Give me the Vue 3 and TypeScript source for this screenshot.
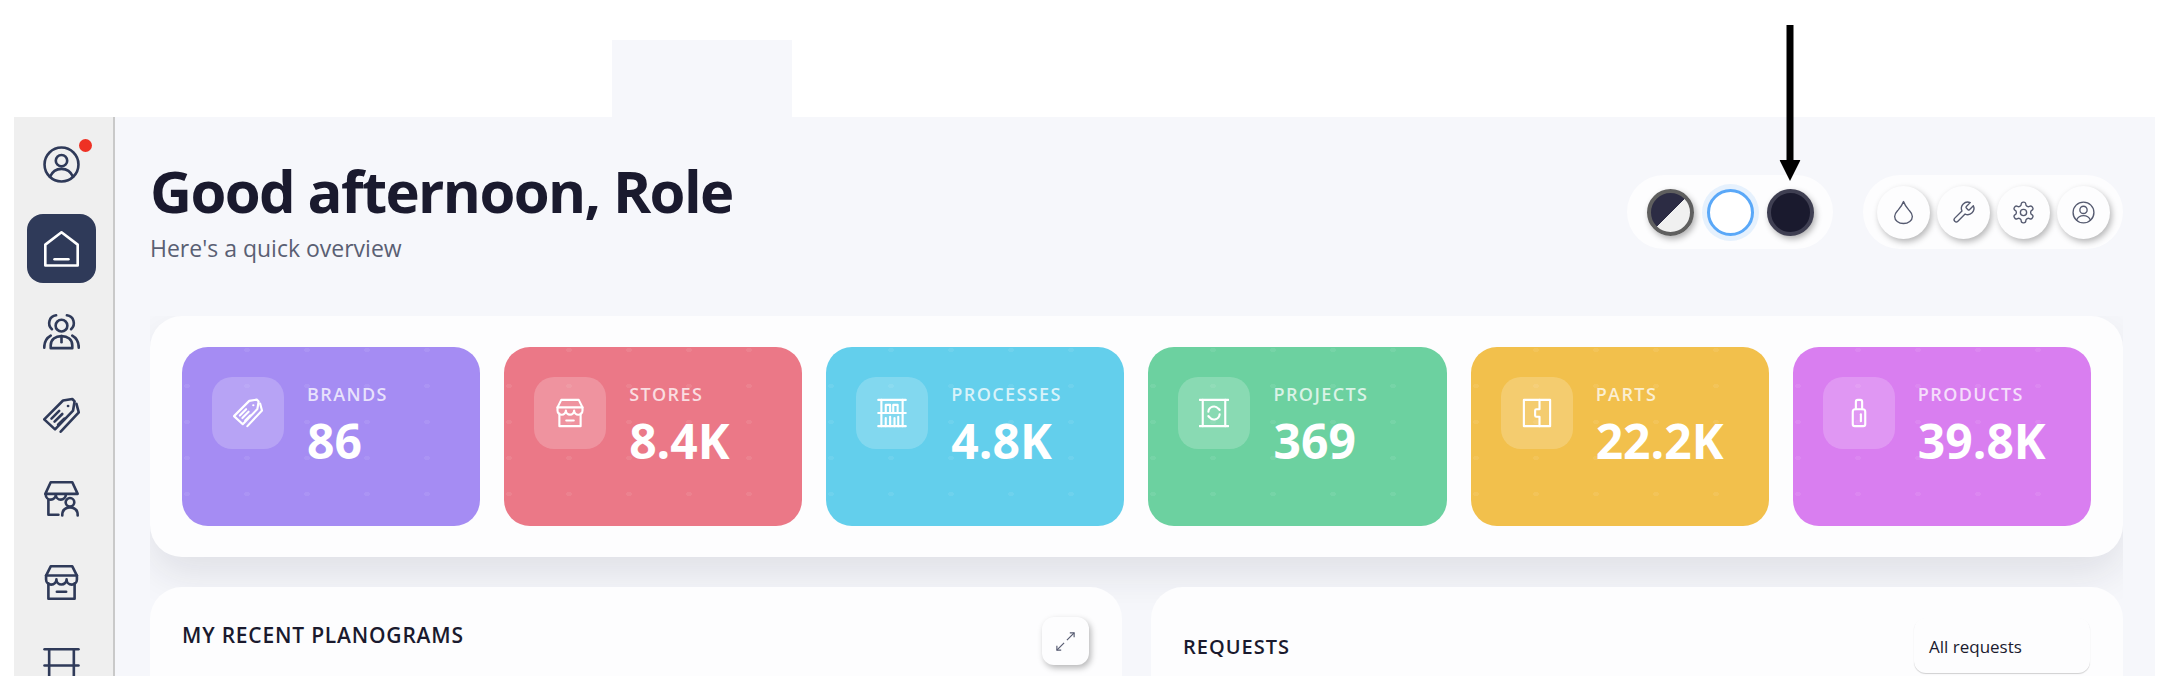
<script setup lang="ts">
type Icon = string[]

const icons: Record<string, Icon> = {
  profile: [
    'M1 12a11 11 0 1 0 22 0a11 11 0 1 0-22 0z',
    'M8.300 9.500a3.700 3.700 0 1 0 7.400 0a3.700 3.700 0 1 0-7.400 0z',
    'M4.500 20c1.500-3.500 4.300-5.200 7.500-5.200s6 1.700 7.500 5.200'
  ],
  home: ['M1.500 23V9.500L12 1.500l10.500 8V23z', 'M7.500 19h9'],
  users: [
    'M8.200 8.200a3.800 3.800 0 1 0 7.600 0a3.800 3.800 0 1 0-7.600 0z',
    'M5.800 10.500C2.500 7.500 4 2 8.500 1.500',
    'M18.200 10.500C21.500 7.500 20 2 15.500 1.500',
    'M5 22.800v-1.800c0-3.800 3-6 7-6s7 2.200 7 6v1.800z',
    'M12 15v4',
    'M.8 22.500c0-3.800 1.700-6.400 4.200-7.800',
    'M23.200 22.500c0-3.800-1.700-6.400-4.200-7.800'
  ],
  tags: [
    'M.8 14.500L13 2.300l6-1 1.500 1.500-1 6L7.800 21z',
    'M16.200 5.800h.1',
    'M5.500 14l5-5',
    'M7.500 16l5-5',
    'M9.800 18l4-4',
    'M21.700 4.500l1.500 5.500L11.500 22.500'
  ],
  shopUser: [
    'M5 1.500h14l3.500 7.500h-21z',
    'M1.800 9.500a3.200 3.200 0 0 0 6.500 0a3.200 3.200 0 0 0 6.500 0',
    'M3.500 13v9.500h6.500',
    'M14.700 14.500a2.800 2.800 0 1 0 5.600 0a2.800 2.800 0 1 0-5.600 0z',
    'M12.500 23c0-3.500 2-5.200 5-5.200s5 1.700 5 5.200'
  ],
  store: [
    'M5 1.500h14l3 6v2.500a3.300 3.300 0 0 1-6.700 0a3.300 3.300 0 0 1-6.600 0a3.300 3.300 0 0 1-6.700 0V7.500z',
    'M2 7.500h20',
    'M3.500 12.500v10h17v-10',
    'M9 18h6'
  ],
  shelf: ['M1 1.500h22', 'M4 1.500V23', 'M20 1.500V23', 'M1 12h22', 'M1 23h22'],
  processes: [
    'M1 1.500h22', 'M1 12h22', 'M1 22.500h22', 'M3.500 1.500v21', 'M20.500 1.500v21',
    'M7 12V5.500h3.500V12', 'M13 12V5.500h3.500V12',
    'M7 22.500V16', 'M10.500 22.500V15', 'M14 22.500V16', 'M17 22.500V15'
  ],
  projects: [
    'M.5 1.500h23', 'M.5 22.500h23', 'M3 1.500v21', 'M21 1.500v21',
    'M7.500 11a4.500 4.500 0 0 1 8-2.500l1 1', 'M16.500 13a4.500 4.500 0 0 1-8 2.500l-1-1'
  ],
  parts: [
    'M1.500 1.500h21v21h-21z',
    'M14 1.500v7.500h-2.500a1 1 0 0 0-1 1v4a1 1 0 0 0 1 1H14v7.500'
  ],
  products: [
    'M9.500 9V3a1.500 1.500 0 0 1 1.500-1.500h2A1.500 1.500 0 0 1 14.500 3v6',
    'M7 11a2 2 0 0 1 2-2h6a2 2 0 0 1 2 2v10a1.500 1.500 0 0 1-1.500 1.500h-7A1.500 1.500 0 0 1 7 21z',
    'M13.500 13v5.500'
  ],
  drop: ['M12 1.500c-1 3-2.800 5.400-5 8-1.800 2-3.500 3.500-3.500 6.300a8.500 6.800 0 0 0 17 0c0-2.800-1.700-4.300-3.500-6.300-2.200-2.600-4-5-5-8z'],
  wrench: ['M14.700 6.300a1 1 0 0 0 0 1.400l1.600 1.600a1 1 0 0 0 1.400 0l3.770-3.770a6 6 0 0 1-7.940 7.940l-6.910 6.910a2.120 2.120 0 0 1-3-3l6.910-6.910a6 6 0 0 1 7.940-7.940l-3.760 3.760z'],
  gear: [
    'M12.220 2h-.44a2 2 0 0 0-2 2v.18a2 2 0 0 1-1 1.730l-.43.25a2 2 0 0 1-2 0l-.15-.08a2 2 0 0 0-2.730.73l-.22.38a2 2 0 0 0 .73 2.730l.15.1a2 2 0 0 1 1 1.720v.51a2 2 0 0 1-1 1.740l-.15.09a2 2 0 0 0-.73 2.730l.22.38a2 2 0 0 0 2.730.73l.15-.08a2 2 0 0 1 2 0l.43.25a2 2 0 0 1 1 1.730V20a2 2 0 0 0 2 2h.44a2 2 0 0 0 2-2v-.18a2 2 0 0 1 1-1.730l.43-.25a2 2 0 0 1 2 0l.15.08a2 2 0 0 0 2.730-.73l.22-.39a2 2 0 0 0-.73-2.730l-.15-.08a2 2 0 0 1-1-1.740v-.5a2 2 0 0 1 1-1.740l.15-.09a2 2 0 0 0 .73-2.730l-.22-.38a2 2 0 0 0-2.730-.73l-.15.08a2 2 0 0 1-2 0l-.43-.25a2 2 0 0 1-1-1.730V4a2 2 0 0 0-2-2z',
    'M9 12a3 3 0 1 0 6 0a3 3 0 1 0-6 0z'
  ],
  account: [
    'M2 12a10 10 0 1 0 20 0a10 10 0 1 0-20 0z',
    'M8.500 9.500a3.500 3.500 0 1 0 7 0a3.500 3.500 0 1 0-7 0z',
    'M5.300 19.300c1.200-2.700 3.700-4.300 6.700-4.300s5.500 1.600 6.700 4.300'
  ],
  expand: ['M16.500 3H21v4.500', 'M21 3l-7.500 7.500', 'M3 21l7.500-7.500', 'M3 16.500V21h4.500']
}

const sideItems: { icon: string; active?: boolean; badge?: boolean }[] = [
  { icon: 'profile', badge: true },
  { icon: 'home', active: true },
  { icon: 'users' },
  { icon: 'tags' },
  { icon: 'shopUser' },
  { icon: 'store' },
  { icon: 'shelf' }
]

const metrics = [
  { label: 'BRANDS', value: '86', icon: 'tags', color: 'purple' },
  { label: 'STORES', value: '8.4K', icon: 'store', color: 'red' },
  { label: 'PROCESSES', value: '4.8K', icon: 'processes', color: 'blue' },
  { label: 'PROJECTS', value: '369', icon: 'projects', color: 'green' },
  { label: 'PARTS', value: '22.2K', icon: 'parts', color: 'yellow' },
  { label: 'PRODUCTS', value: '39.8K', icon: 'products', color: 'pink' }
]

const tools = ['drop', 'wrench', 'gear', 'account']
</script>

<template>
  <div class="page">
    <div class="top-strip">
      <div class="tab"></div>
    </div>

    <div class="app">
      <aside class="sidebar">
        <div
          v-for="item in sideItems"
          :key="item.icon"
          class="side-item"
          :class="{ active: item.active }"
        >
          <svg class="side-icon" viewBox="0 0 24 24">
            <path v-for="d in icons[item.icon]" :key="d" :d="d" />
          </svg>
          <span v-if="item.badge" class="badge"></span>
        </div>
      </aside>

      <main class="main">
        <header class="header">
          <div class="greeting">
            <h1>Good afternoon, Role</h1>
            <p>Here's a quick overview</p>
          </div>
          <div class="controls">
            <div class="pill swatches">
              <span class="swatch auto"></span>
              <span class="swatch light"></span>
              <span class="swatch dark">
                <svg class="arrow" viewBox="0 0 21 156">
                  <path d="M7 0h7v135h7l-10.500 21L0 135h7z" />
                </svg>
              </span>
            </div>
            <div class="pill tools">
              <button v-for="tool in tools" :key="tool" class="tool-btn">
                <svg viewBox="0 0 24 24">
                  <path v-for="d in icons[tool]" :key="d" :d="d" />
                </svg>
              </button>
            </div>
          </div>
        </header>

        <div class="content">
          <section class="metrics">
            <div v-for="m in metrics" :key="m.label" class="metric" :class="m.color">
              <div class="metric-icon">
                <svg viewBox="0 0 24 24">
                  <path v-for="d in icons[m.icon]" :key="d" :d="d" />
                </svg>
              </div>
              <div class="metric-text">
                <div class="metric-label">{{ m.label }}</div>
                <div class="metric-value">{{ m.value }}</div>
              </div>
            </div>
          </section>

          <div class="panels">
            <section class="panel planograms">
              <h2>MY RECENT PLANOGRAMS</h2>
              <button class="expand-btn">
                <svg viewBox="0 0 24 24">
                  <path v-for="d in icons.expand" :key="d" :d="d" />
                </svg>
              </button>
            </section>
            <section class="panel requests">
              <h2>REQUESTS</h2>
              <div class="select">All requests</div>
            </section>
          </div>
        </div>
      </main>
    </div>
  </div>
</template>

<style>
html,
body {
  margin: 0;
  background: #fff;
}
</style>

<style scoped>
.page {
  width: 2169px;
  height: 688px;
  overflow: hidden;
  background: #fff;
  font-family: "Open Sans", "Liberation Sans", sans-serif;
  color: #1a1a2e;
}
.top-strip {
  height: 117px;
  padding: 40px 0 0 612px;
  box-sizing: border-box;
}
.tab {
  width: 180px;
  height: 77px;
  background: #f6f7fb;
}
.app {
  display: flex;
  height: 559px;
  margin: 0 14px;
  background: #f6f7fb;
}
.sidebar {
  flex: none;
  width: 95px;
  padding: 13px 4px 0 0;
  overflow: hidden;
  display: flex;
  flex-direction: column;
  align-items: center;
  gap: 14.5px;
  background: #efefef;
  border-right: 2px solid #c9c9c9;
}
.side-item {
  position: relative;
  flex: none;
  width: 69px;
  height: 69px;
  display: flex;
  align-items: center;
  justify-content: center;
  border-radius: 16px;
}
.side-item.active {
  background: #2f3a59;
}
.side-icon {
  width: 37px;
  height: 37px;
  fill: none;
  stroke: #2f3a59;
  stroke-width: 1.7;
  stroke-linecap: round;
  stroke-linejoin: round;
}
.active .side-icon {
  stroke: #fff;
}
.badge {
  position: absolute;
  top: 9px;
  right: 4px;
  width: 13px;
  height: 13px;
  border-radius: 50%;
  background: #ee3124;
}
.main {
  flex: 1;
  min-width: 0;
  display: flex;
  flex-direction: column;
  padding: 0 32px 0 35px;
}
.header {
  flex: none;
  height: 199px;
  display: flex;
  justify-content: space-between;
}
.greeting {
  padding-top: 39px;
}
.greeting h1 {
  margin: 0;
  font-size: 58px;
  line-height: 70px;
  font-weight: 700;
  letter-spacing: -1.6px;
  color: #1a1a2e;
}
.greeting p {
  margin: 8px 0 0;
  font-size: 23px;
  line-height: 28px;
  color: #5a5f73;
}
.controls {
  display: flex;
  align-items: flex-start;
  gap: 30px;
  padding-top: 58px;
}
.pill {
  height: 74px;
  box-sizing: border-box;
  display: flex;
  align-items: center;
  border-radius: 37px;
  background: #fdfdfe;
}
.swatches {
  gap: 13px;
  padding: 0 19.5px;
}
.swatch {
  position: relative;
  width: 47px;
  height: 47px;
  box-sizing: border-box;
  border-radius: 50%;
  box-shadow: 2px 3px 6px rgba(0, 0, 0, 0.3);
}
.swatch.auto {
  border: 4px solid #5f5f5f;
  background: linear-gradient(135deg, #2c2c44 50%, #f0f0f0 50%);
}
.swatch.light {
  border: 3px solid #5aa8f8;
  background: #fff;
  box-shadow: 0 0 0 5px rgba(90, 168, 248, 0.14);
}
.swatch.dark {
  border: 4px solid #3f3f52;
  background: #1a1a2e;
}
.arrow {
  position: absolute;
  left: 50%;
  bottom: calc(100% + 12px);
  width: 21px;
  height: 156px;
  transform: translateX(-50%);
  fill: #000;
}
.tools {
  gap: 7px;
  padding: 0 13.5px;
}
.tool-btn {
  flex: none;
  width: 53px;
  height: 53px;
  padding: 0;
  display: flex;
  align-items: center;
  justify-content: center;
  border: none;
  border-radius: 50%;
  background: #fdfdfe;
  box-shadow: 2px 3px 6px rgba(0, 0, 0, 0.28);
}
.tool-btn svg {
  width: 25px;
  height: 25px;
  fill: none;
  stroke: #555a70;
  stroke-width: 1.3;
  stroke-linecap: round;
  stroke-linejoin: round;
}
.content {
  flex: 1;
  min-height: 0;
  overflow: hidden;
  display: flex;
  flex-direction: column;
  gap: 30px;
}
.metrics {
  flex: none;
  height: 241px;
  box-sizing: border-box;
  padding: 31px 32px 31px 32px;
  display: grid;
  grid-template-columns: repeat(6, 1fr);
  gap: 24px;
  border-radius: 32px;
  background: #fdfdfe;
  box-shadow: 0 18px 40px rgba(26, 26, 46, 0.1);
}
.metric {
  display: flex;
  align-items: flex-start;
  gap: 23px;
  padding: 30px;
  border-radius: 26px;
  background-image: radial-gradient(ellipse 3px 2px at 5px 3px, rgba(255, 255, 255, 0.07) 99%, transparent);
  background-size: 60px 36px;
}
.purple { background-color: #a58cf3; }
.red { background-color: #eb7887; }
.blue { background-color: #63cfec; }
.green { background-color: #6cd1a0; }
.yellow { background-color: #f2c04c; }
.pink { background-color: #d97ef0; }
.metric-icon {
  flex: none;
  width: 72px;
  height: 72px;
  display: flex;
  align-items: center;
  justify-content: center;
  border-radius: 20px;
  background: rgba(255, 255, 255, 0.2);
}
.metric-icon svg {
  width: 30px;
  height: 30px;
  fill: none;
  stroke: #fff;
  stroke-width: 1.7;
  stroke-linecap: round;
  stroke-linejoin: round;
}
.metric-label {
  margin-top: 5px;
  font-size: 18px;
  line-height: 24px;
  font-weight: 600;
  letter-spacing: 1.4px;
  color: rgba(255, 255, 255, 0.75);
}
.metric-value {
  margin-top: 7px;
  font-size: 48px;
  line-height: 56px;
  font-weight: 700;
  color: #fff;
}
.panels {
  flex: none;
  display: grid;
  grid-template-columns: 1fr 1fr;
  gap: 29px;
}
.panel {
  height: 200px;
  box-sizing: border-box;
  display: flex;
  align-items: flex-start;
  justify-content: space-between;
  border-radius: 32px;
  background: #fdfdfe;
}
.panel h2 {
  margin: 0;
  font-size: 20px;
  line-height: 28px;
  font-weight: 600;
  letter-spacing: 1px;
  color: #1a1a2e;
}
.planograms {
  padding: 35px 33px 0 32px;
}
.planograms h2 {
  margin-top: -1px;
  font-size: 21px;
  font-weight: 550;
  letter-spacing: 0.8px;
}
.expand-btn {
  flex: none;
  width: 47px;
  height: 48px;
  margin-top: -5px;
  padding: 0;
  display: flex;
  align-items: center;
  justify-content: center;
  border: none;
  border-radius: 12px;
  background: #fdfdfe;
  box-shadow: 2px 3px 6px rgba(0, 0, 0, 0.28);
}
.expand-btn svg {
  width: 23px;
  height: 23px;
  fill: none;
  stroke: #555a70;
  stroke-width: 1.2;
}
.requests {
  padding: 31px 33px 0 32px;
}
.requests h2 {
  margin-top: 15px;
}
.select {
  width: 176px;
  height: 55px;
  box-sizing: border-box;
  padding: 2px 15px 0;
  display: flex;
  align-items: center;
  font-size: 17px;
  color: #1a1a2e;
  border-radius: 12px;
  background: #fdfdfe;
  box-shadow: 0 1px 1px rgba(0, 0, 0, 0.18);
}
</style>
